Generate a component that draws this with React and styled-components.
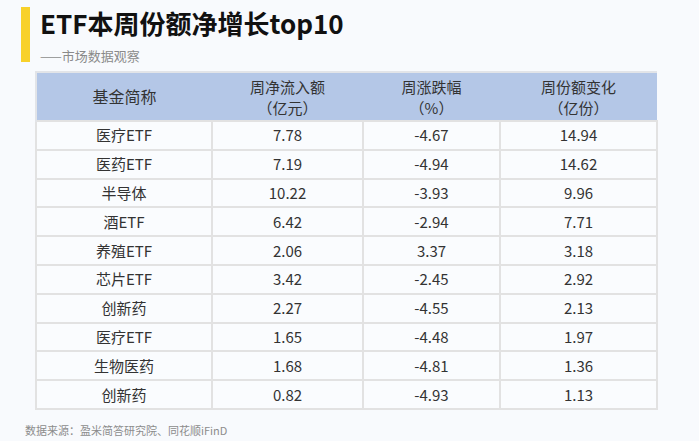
import React from 'react'
import styled, { createGlobalStyle } from 'styled-components'

const GlobalStyle = createGlobalStyle`
  html, body {
    margin: 0;
    padding: 0;
    background: #f8fafd;
  }
  body {
    font-family: 'Noto Sans CJK SC', 'Noto Sans', sans-serif;
    color: #333;
  }
`

const Page = styled.div`
  width: 699px;
  height: 441px;
  box-sizing: border-box;
  padding-top: 7px;
  overflow: hidden;
`

const HeadBlock = styled.div`
  margin-left: 21px;
  height: 55px;
  border-left: 9px solid #f8d12a;
  padding-left: 10px;
  box-sizing: border-box;
`

const Title = styled.h1`
  margin: 0;
  font-size: 26px;
  line-height: 32px;
  font-weight: 700;
  color: #111;
`

const Subtitle = styled.div`
  margin-top: 8px;
  font-size: 13px;
  line-height: 18px;
  color: #8a8a8a;
`

const Table = styled.table`
  margin: 9px 0 0 35px;
  width: 621px;
  table-layout: fixed;
  border-collapse: collapse;
  font-size: 15px;
`

const HeadCell = styled.th`
  background: #b4c7e7;
  height: 47px;
  padding: 0;
  font-weight: 400;
  font-size: 15px;
  line-height: 21px;
  color: #333;
  text-align: center;
  border-top: 2px solid #e2e4e8;
  &:first-child {
    border-left: 2px solid #e2e4e8;
    font-size: 16px;
  }
`

const Cell = styled.td`
  height: 26.8px;
  padding: 0;
  text-align: center;
  line-height: 20px;
  color: #333;
  border: 2px solid #e2e2e2;
  background: #fafcfe;
`

const Source = styled.div`
  margin: 12px 0 0 25px;
  font-size: 11px;
  line-height: 16px;
  color: #8c8c8c;
`

const rows = [
  ['医疗ETF', '7.78', '-4.67', '14.94'],
  ['医药ETF', '7.19', '-4.94', '14.62'],
  ['半导体', '10.22', '-3.93', '9.96'],
  ['酒ETF', '6.42', '-2.94', '7.71'],
  ['养殖ETF', '2.06', '3.37', '3.18'],
  ['芯片ETF', '3.42', '-2.45', '2.92'],
  ['创新药', '2.27', '-4.55', '2.13'],
  ['医疗ETF', '1.65', '-4.48', '1.97'],
  ['生物医药', '1.68', '-4.81', '1.36'],
  ['创新药', '0.82', '-4.93', '1.13'],
]

const App = () => (
  <Page>
    <GlobalStyle />
    <HeadBlock>
      <Title>ETF本周份额净增长top10</Title>
      <Subtitle>——市场数据观察</Subtitle>
    </HeadBlock>
    <Table>
      <colgroup>
        <col style={{ width: 176 }} />
        <col style={{ width: 151 }} />
        <col style={{ width: 137 }} />
        <col style={{ width: 157 }} />
      </colgroup>
      <thead>
        <tr>
          <HeadCell>基金简称</HeadCell>
          <HeadCell>周净流入额<br />（亿元）</HeadCell>
          <HeadCell>周涨跌幅<br />（%）</HeadCell>
          <HeadCell>周份额变化<br />（亿份）</HeadCell>
        </tr>
      </thead>
      <tbody>
        {rows.map((r, i) => (
          <tr key={i}>
            {r.map((v, j) => (
              <Cell key={j}>{v}</Cell>
            ))}
          </tr>
        ))}
      </tbody>
    </Table>
    <Source>数据来源：盈米简答研究院、同花顺iFinD</Source>
  </Page>
)

export default App
